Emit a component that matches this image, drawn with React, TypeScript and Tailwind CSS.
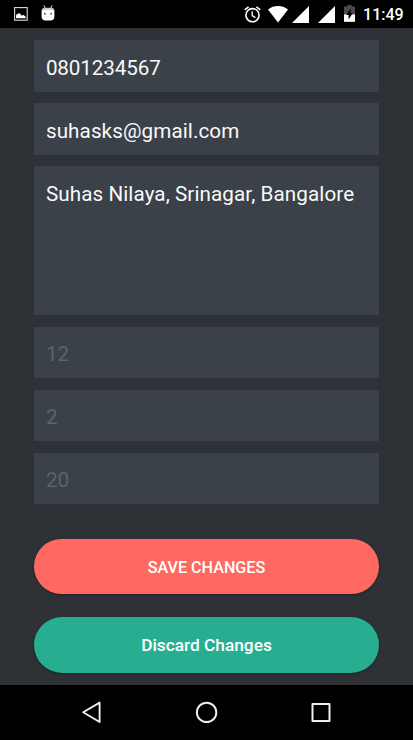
import React from "react";

type FieldProps = { text: string; muted?: boolean; tall?: boolean; tracking?: string };

function Field({ text, muted, tall, tracking = "" }: FieldProps) {
  return (
    <div
      className={`flex shrink-0 bg-[#3b4148] px-[11.5px] text-[20.65px] leading-[24px] ${
        tall ? "h-[148.8px] items-start pt-[15.6px]" : "h-[51.6px] items-center pt-[2.8px]"
      } ${muted ? "text-[#5f6267]" : "text-[#f9f9f9]"} ${tracking}`}
    >
      {text}
    </div>
  );
}

function Signal({ className }: { className: string }) {
  return (
    <svg className={className} width="17" height="17" viewBox="0 0 17 17">
      <path d="M0 17 17 0V17Z" fill="#fff" />
    </svg>
  );
}

function StatusBar() {
  return (
    <header className="flex h-[27.6px] shrink-0 items-start bg-black text-white">
      <svg className="mt-[7px] ml-[13.5px]" width="14" height="14" viewBox="0 0 14 14">
        <rect x=".6" y=".6" width="12.6" height="12.6" fill="none" stroke="#ddd" strokeWidth="1.1" />
        <path d="M2 11.2V8.8Q2.2 7.2 3.5 7Q5.2 5.4 6.8 7.4L7.7 8.7Q9.3 7.4 10.6 8.8Q11.9 9.2 11.8 11.2Z" fill="#fff" />
      </svg>
      <svg className="mt-[5px] ml-[13.5px]" width="14" height="16" viewBox="0 0 14 16">
        <path d="M3 .3 4.2 3.6M11 .3 9.8 3.6" stroke="#ddd" strokeWidth="1" />
        <path d="M.7 6Q.8 2.7 4.2 2.7H9.8Q13.2 2.7 13.3 6Z" fill="#ccc" />
        <path d="M.6 5.5Q7 4 13.4 5.5V11.5Q13.3 15.6 9.5 15.6H4.5Q.7 15.6.6 11.5Z" fill="#fff" />
        <circle cx="3.9" cy="8.8" r=".9" fill="#333" />
        <circle cx="10.1" cy="8.8" r=".9" fill="#333" />
      </svg>
      <svg className="mt-[5.5px] ml-auto" width="17" height="17" viewBox="0 0 17 17" fill="none" stroke="#fff">
        <circle cx="8.5" cy="9.2" r="6.6" strokeWidth="1.6" />
        <path d="M.7 3.9 4.6.8M16.3 3.9 12.4.8" strokeWidth="1.6" />
        <path d="M8.2 5.2V9.6L11.4 11.6" strokeWidth="1.3" />
      </svg>
      <svg className="mt-[5.5px] ml-[7px]" width="20" height="17" viewBox="0 0 20 17">
        <path d="M0 3.5C5.8-1.1 14.2-1.1 20 3.5L10 16.5Z" fill="#fff" />
      </svg>
      <Signal className="mt-[5.5px] ml-[4.5px]" />
      <Signal className="mt-[5.5px] ml-[8.5px]" />
      <svg className="mt-[5.4px] ml-[9px]" width="11" height="17" viewBox="0 0 11 17">
        <path d="M3.3 0H7.7V1.6H11V16.8H0V1.6H3.3Z" fill="#494949" />
        <path d="M0 9.4H11V16.8H0Z" fill="#fff" />
        <path d="M6.5 3.6V7.9H8.8L4.6 14.6V10H2.3Z" fill="#000" />
      </svg>
      <span className="mt-[5px] mr-[9.3px] ml-[8.3px] text-[16px] leading-[20px] font-medium">11:49</span>
    </header>
  );
}

function NavigationBar() {
  return (
    <nav className="flex h-[55.4px] shrink-0 items-center justify-center gap-[90.7px] bg-black">
      <svg width="24" height="24" viewBox="0 0 24 24" fill="none" stroke="#eee" strokeWidth="1.9" strokeLinejoin="round">
        <path d="M3.2 12.3 19.6 2.6V22Z" />
      </svg>
      <svg width="24" height="24" viewBox="0 0 24 24" fill="none" stroke="#eee" strokeWidth="2">
        <circle cx="11.6" cy="12.4" r="9.7" />
      </svg>
      <svg width="24" height="24" viewBox="0 0 24 24" fill="none" stroke="#eee" strokeWidth="2" strokeLinejoin="round">
        <rect x="3.5" y="3.9" width="17" height="17" />
      </svg>
    </nav>
  );
}

export default function App() {
  return (
    <div className="flex h-[740px] w-[413px] flex-col overflow-hidden bg-[#2e3135] font-['Roboto',sans-serif]">
      <StatusBar />
      <main className="flex min-h-0 flex-1 flex-col px-[34.4px] pt-[12.8px]">
        <div className="flex flex-col gap-[11.45px]">
          <Field text="0801234567" tracking="tracking-[-0.12px]" />
          <Field text="suhasks@gmail.com" tracking="tracking-[0.09px]" />
          <Field text="Suhas Nilaya, Srinagar, Bangalore" tall tracking="tracking-[0.09px]" />
          <Field text="12" muted />
          <Field text="2" muted />
          <Field text="20" muted />
        </div>
        <div className="mt-[34.6px] flex flex-col gap-[22.9px] font-medium text-white">
          <button className="h-[55.5px] rounded-full bg-[#ff6961] pt-[2px] text-[16.15px] shadow-[0_1px_2.5px_rgba(0,0,0,0.35)]">
            SAVE CHANGES
          </button>
          <button className="h-[55.5px] rounded-full bg-[#27ae90] pt-[2px] text-[17.3px] shadow-[0_1px_2.5px_rgba(0,0,0,0.35)]">
            Discard Changes
          </button>
        </div>
      </main>
      <NavigationBar />
    </div>
  );
}
